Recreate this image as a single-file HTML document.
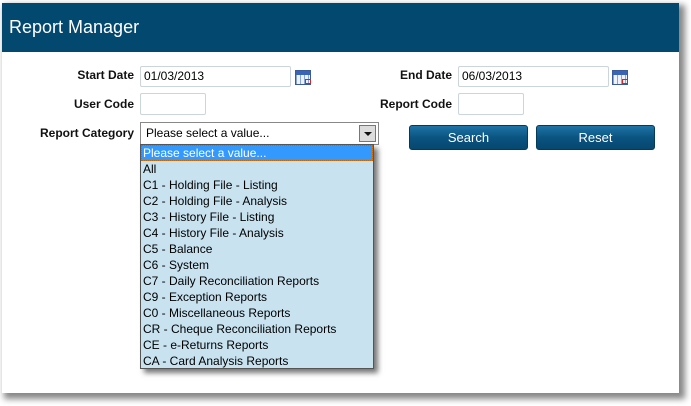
<!DOCTYPE html><html><head><style>
body{margin:0;width:691px;height:406px;background:#fff;position:relative;overflow:hidden;font-family:"Liberation Sans",sans-serif;}
.box{position:absolute;left:2px;top:3px;width:677px;height:390px;background:#fff;box-shadow:4px 4px 6px 2px #888;}
.hd{position:absolute;left:0;top:0;width:677px;height:49px;background:#03486e;color:#fff;font-size:18px;line-height:49px;padding-left:7px;box-sizing:border-box;}
.a{position:absolute;}
.lbl{font-size:12px;font-weight:bold;color:#111;text-align:right;width:130px;}
.in{border:1px solid #ccd4dc;border-radius:2px;background:#fff;font-size:12px;line-height:19px;padding-left:3px;box-sizing:border-box;}
.cal{width:16px;height:15px;background:linear-gradient(#3a64b8 0 4px,transparent 4px),repeating-linear-gradient(90deg,#8aa6d8 0 1px,#eef2fa 1px 4px),#eef2fa;border:1px solid #3a5a9a;box-sizing:border-box;}
.cal:after{content:"";position:absolute;left:9px;top:8px;width:4px;height:3px;border:1px solid #e02020;}
.btn{background:linear-gradient(#1e74a6,#0b5381 50%,#064870);color:#fff;border:1px solid #053a5a;border-radius:3px;font-size:13px;text-align:center;line-height:23px;width:119px;height:25px;box-sizing:border-box;}
.list{left:140px;top:144px;width:234px;height:225px;background:#c8e2ef;border:1px solid #555;box-sizing:border-box;box-shadow:4px 4px 5px #777;font-size:12px;}
.list div{height:16px;line-height:16px;padding-left:2px;}
</style></head><body>
<div class="box"><div class="hd">Report Manager</div></div>
<div class="a lbl" style="left:4px;top:68px">Start Date</div>
<div class="a in" style="left:140px;top:66px;width:151px;height:21px">01/03/2013</div>
<div class="a cal" style="left:295px;top:70px"></div>
<div class="a lbl" style="left:4px;top:97px">User Code</div>
<div class="a in" style="left:140px;top:93px;width:66px;height:22px"></div>
<div class="a lbl" style="left:4px;top:126px">Report Category</div>
<div class="a" style="left:140px;top:122px;width:239px;height:23px;border:1px solid #888;box-sizing:border-box;background:#fff;font-size:12px;line-height:21px;padding-left:5px;">Please select a value...
<div style="position:absolute;right:2px;top:2px;width:15px;height:15px;border:1px solid #777;background:#ddd;"><div style="position:absolute;left:4px;top:6px;border-left:4px solid transparent;border-right:4px solid transparent;border-top:4px solid #111;width:0;height:0"></div></div></div>
<div class="a lbl" style="left:322px;top:68px">End Date</div>
<div class="a in" style="left:458px;top:66px;width:151px;height:21px">06/03/2013</div>
<div class="a cal" style="left:612px;top:70px"></div>
<div class="a lbl" style="left:322px;top:97px">Report Code</div>
<div class="a in" style="left:458px;top:93px;width:66px;height:22px"></div>
<div class="a btn" style="left:409px;top:125px">Search</div>
<div class="a btn" style="left:536px;top:125px">Reset</div>
<div class="a list">
<div style="background:#3399ff;color:#fff;outline:1px dotted #c86400;outline-offset:-1px">Please select a value...</div>
<div>All</div><div>C1 - Holding File - Listing</div><div>C2 - Holding File - Analysis</div><div>C3 - History File - Listing</div><div>C4 - History File - Analysis</div><div>C5 - Balance</div><div>C6 - System</div><div>C7 - Daily Reconciliation Reports</div><div>C9 - Exception Reports</div><div>C0 - Miscellaneous Reports</div><div>CR - Cheque Reconciliation Reports</div><div>CE - e-Returns Reports</div><div>CA - Card Analysis Reports</div>
</div>
</body></html>
